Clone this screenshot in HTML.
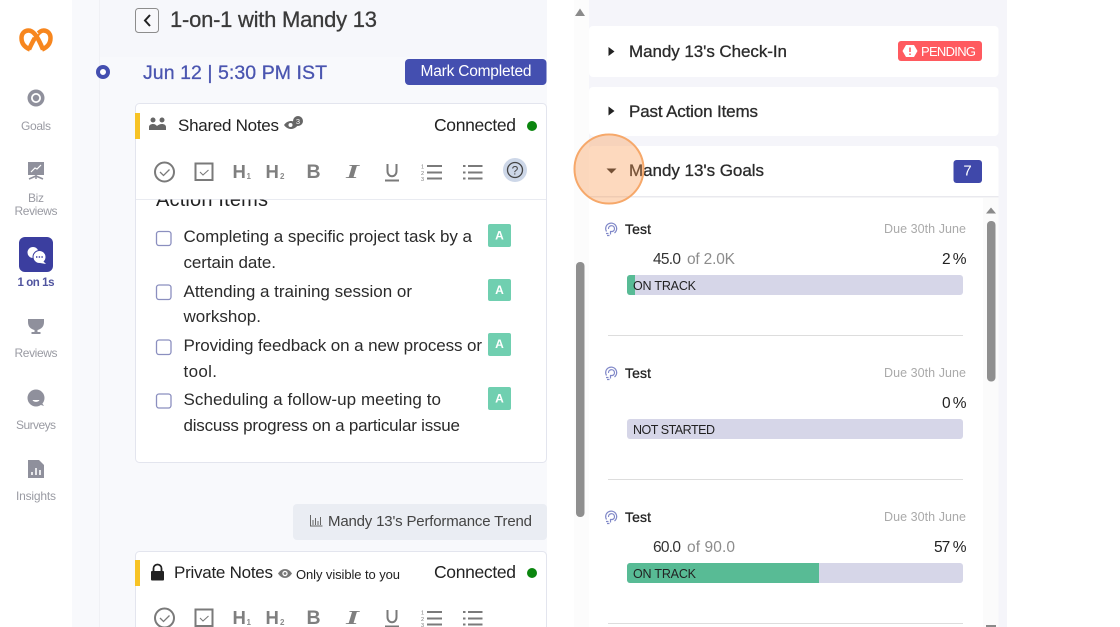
<!DOCTYPE html>
<html><head><meta charset="utf-8"><title>1-on-1 with Mandy 13</title>
<style>
html,body{margin:0;padding:0;width:1120px;height:627px;overflow:hidden;background:#fff}
svg{display:block;filter:blur(.3px)}
text{font-family:"Liberation Sans",sans-serif;fill:#2b2b2b}
.m{stroke:currentColor;stroke-width:.3px}
.nav{font-size:12px;fill:#9a9ba3;text-anchor:middle}
.ic{fill:#8f909c}
.tb{fill:none;stroke:#7a7a7a}
.h{font-weight:bold;fill:#7f7f7f}
.s{font-size:8px;font-weight:bold;fill:#8a8a8a}
</style></head><body>
<svg width="1120" height="627" viewBox="0 0 1120 627" xmlns="http://www.w3.org/2000/svg">
<defs><clipPath id="ai"><rect x="140" y="199.500" width="400" height="14"/></clipPath></defs>
<!-- backgrounds -->
<rect width="1120" height="627" fill="#fff"/>
<rect x="72" width="475" height="627" fill="#f8f9fc"/>
<rect x="99" width="1" height="627" fill="#f0f1f5"/>
<rect x="100" width="447" height="57" fill="#f6f7fb"/>
<rect x="574" width="15" height="627" fill="#fcfcfc"/>
<rect x="589" width="418" height="627" fill="#f5f5fa"/>

<!-- sidebar -->
<g fill="none" stroke-linecap="butt">
<path d="M42 49.500C48 47 50.500 43 50.500 38 50.500 33 47 30.500 43.500 30.500 39 30.500 35 36 29 49.500" stroke="#f7861e" stroke-width="4.500"/>
<path d="M30 49.500C24 47 21.500 43 21.500 38 21.500 33 25 30.500 28.500 30.500 33 30.500 37 35 43 49.500" stroke="#fff" stroke-width="6.500" stroke-dasharray="0 22 14 100"/>
<path d="M30 49.500C24 47 21.500 43 21.500 38 21.500 33 25 30.500 28.500 30.500 33 30.500 37 35 43 49.500" stroke="#f7861e" stroke-width="4.500"/>
</g>
<circle cx="36" cy="98" r="8.500" class="ic"/><circle cx="36" cy="98" r="5" fill="#fff"/><circle cx="36" cy="98" r="3.200" class="ic"/>
<text class="nav" x="36" y="130" textLength="30">Goals</text>
<rect x="28" y="162" width="16" height="13" class="ic"/><path d="M31 172l4-4 2 1 4-4" stroke="#fff" stroke-width="1.200" fill="none"/><path d="M36 175v4M29 179l7-3 7 3" stroke="#8f909c" stroke-width="1.500" fill="none"/>
<text class="nav" x="36" y="202" textLength="16">Biz</text>
<text class="nav" x="36" y="215" textLength="43">Reviews</text>
<rect x="19" y="237" width="34" height="35" rx="6" fill="#3b3e9f"/>
<circle cx="33" cy="252.500" r="5.500" fill="#fff"/><circle cx="39.500" cy="257" r="6.500" fill="#fff" stroke="#3b3e9f"/><path d="M43 261l3 3-6-1z" fill="#fff"/>
<path d="M36 257h7.500" stroke="#3b3e9f" stroke-width="1.400" stroke-dasharray="1.400 1.300"/>
<text x="36" y="286" font-size="11.500" font-weight="bold" text-anchor="middle" textLength="37" style="fill:#50549f">1 on 1s</text>
<path d="M28 319h16v3c0 5-3 7-6.500 8v2h3v2h-9v-2h3v-2C31 329 28 327 28 322z" class="ic"/>
<text class="nav" x="36" y="357" textLength="43">Reviews</text>
<circle cx="36" cy="398" r="8.500" class="ic"/><path d="M41 405l3 1-2-3z" class="ic"/><path d="M32.500 400h7c-1 2.500-6 2.500-7 0z" fill="#fff"/>
<text class="nav" x="36" y="429" textLength="40">Surveys</text>
<path d="M28 460h11l5 5v13H28z" class="ic"/><path d="M32 475v-3M36 475v-7M40 475v-5" stroke="#fff" stroke-width="1.600"/>
<text class="nav" x="36" y="500" textLength="40">Insights</text>

<!-- timeline dot -->
<circle cx="103" cy="72" r="5" fill="#fff" stroke="#444fb0" stroke-width="4"/>

<!-- header -->
<rect x="135.500" y="8.500" width="23" height="24" rx="3" fill="#f8f8fb" stroke="#8d8d8d"/>
<path d="M150 15l-5 5.500 5 5.500" fill="none" stroke="#222" stroke-width="2"/>
<text x="170" y="27" font-size="22" textLength="207" class="m" style="color:#3a3a3a;fill:#3a3a3a">1-on-1 with Mandy 13</text>
<text x="143" y="79" font-size="19.500" textLength="184" class="m" style="color:#4a55b0;fill:#4a55b0" xml:space="preserve">Jun 12 | 5:30 PM IST</text>
<rect x="405" y="59" width="141.500" height="26" rx="4" fill="#444fb0"/>
<text x="420.500" y="76" font-size="15.500" textLength="111" style="fill:#fff">Mark Completed</text>

<!-- shared notes card -->
<rect x="135.500" y="103.500" width="411" height="359" rx="4" fill="#fff" stroke="#e3e5ee"/>
<rect x="135" y="113" width="5" height="26" fill="#f7c325"/>
<g fill="#666"><circle cx="153" cy="120" r="2.500"/><circle cx="162" cy="120" r="2.500"/><path d="M149 130v-3c0-2 2-3 4-3s3 1 4 2c1-1 3-2 5-2s4 1 4 3v3z"/></g>
<text x="178" y="131" font-size="17" textLength="101" style="fill:#222">Shared Notes</text>
<path d="M284 125c2-3 5-4 7-4s5 1 7 4c-2 3-5 4-7 4s-5-1-7-4z" fill="#666"/><circle cx="290.500" cy="125" r="2" fill="#fff"/><circle cx="298" cy="121" r="5" fill="#666"/>
<text x="298" y="124" font-size="7.500" text-anchor="middle" style="fill:#fff">3</text>
<text x="434" y="131" font-size="17.500" textLength="82" style="fill:#222">Connected</text>
<circle cx="532" cy="126" r="5" fill="#0b860f"/>
<!-- toolbar -->
<g stroke-width="2">
<circle cx="164.500" cy="172" r="9.500" class="tb"/><path d="M160 172l3.500 3.500 6-6" class="tb" stroke-width="1.300"/>
<rect x="195.500" y="163.500" width="17" height="16.500" class="tb"/><path d="M200 172l3 3 5.500-5" class="tb" stroke-width="1.100"/>
<text x="232.500" y="178" class="h" font-size="18.500">H</text><text x="246.500" y="179" class="s">1</text>
<text x="265.500" y="178" class="h" font-size="18.500">H</text><text x="280" y="179" class="s">2</text>
<text x="306.500" y="178" class="h" font-size="19.500">B</text>
<text x="346" y="178" class="h" font-size="20" font-style="italic" textLength="13" lengthAdjust="spacingAndGlyphs" style="font-family:'Liberation Serif',serif">I</text>
<path d="M387.500 164v7c0 7 9 7 9 0v-7" class="tb"/><path d="M385 180.500h14" class="tb"/>
<path d="M427 166h15M427 172.500h15M427 178.500h15" class="tb"/>
<text x="421" y="168.500" font-size="5.500" style="fill:#7a7a7a">1</text><text x="421" y="175" font-size="5.500" style="fill:#7a7a7a">2</text><text x="421" y="181" font-size="5.500" style="fill:#7a7a7a">3</text>
<path d="M468 166h14.500M468 172.500h14.500M468 178.500h14.500" class="tb"/>
<path d="M463 166h2.500M463 172.500h2.500M463 178.500h2.500" class="tb"/>
<circle cx="515" cy="170" r="12" fill="#cdd7e8"/><circle cx="515" cy="170" r="7.500" fill="none" stroke="#444" stroke-width="1.300"/>
<text x="515" y="174.500" font-size="12" text-anchor="middle" style="fill:#444">?</text>
</g>
<rect x="136" y="199" width="410" height="1" fill="#e9ebf1"/>
<g clip-path="url(#ai)"><text x="156" y="206" font-size="20" textLength="112" style="fill:#222">Action Items</text></g>

<!-- action items -->
<g fill="#fff" stroke="#8b8fbf" stroke-width="1.300">
<rect x="156.500" y="231.500" width="14.500" height="14" rx="2.500"/>
<rect x="156.500" y="285" width="14.500" height="14.500" rx="2.500"/>
<rect x="156.500" y="340" width="14.500" height="14.500" rx="2.500"/>
<rect x="156.500" y="394" width="14.500" height="14" rx="2.500"/>
</g>
<g font-size="17">
<text x="183.500" y="242" textLength="288.500">Completing a specific project task by a</text>
<text x="183.500" y="268" textLength="92.500">certain date.</text>
<text x="183.500" y="297" textLength="228.500">Attending a training session or</text>
<text x="183.500" y="322" textLength="77.500">workshop.</text>
<text x="183.500" y="351" textLength="298.500">Providing feedback on a new process or</text>
<text x="183.500" y="377" textLength="33.500">tool.</text>
<text x="183.500" y="405" textLength="257.500">Scheduling a follow-up meeting to</text>
<text x="183.500" y="431" textLength="276.500">discuss progress on a particular issue</text>
</g>
<g fill="#70cfb0">
<rect x="488" y="224" width="23" height="23" rx="2"/><rect x="488" y="279" width="23" height="22" rx="2"/>
<rect x="488" y="333" width="23" height="23" rx="2"/><rect x="488" y="387" width="23" height="23" rx="2"/>
</g>
<g font-size="12" font-weight="bold" text-anchor="middle">
<text x="499.500" y="239.500" style="fill:#fff">A</text><text x="499.500" y="294" style="fill:#fff">A</text>
<text x="499.500" y="348" style="fill:#fff">A</text><text x="499.500" y="402.500" style="fill:#fff">A</text>
</g>

<!-- performance trend -->
<rect x="293" y="504" width="254" height="36" rx="4" fill="#eaedf3"/>
<path d="M310.500 515v11h12M313 525v-5M315.500 525v-7M318 525v-4M320.500 525v-8" fill="none" stroke="#666" stroke-width="1"/>
<text x="328" y="526" font-size="15" textLength="204" style="fill:#444">Mandy 13's Performance Trend</text>

<!-- private notes -->
<rect x="135.500" y="551.500" width="411" height="90" rx="4" fill="#fff" stroke="#e3e5ee"/>
<rect x="135" y="560" width="5" height="26" fill="#f7c325"/>
<rect x="151" y="571" width="13" height="9.500" rx="1" fill="#222"/><path d="M153.500 571v-2.500a4 4 0 0 1 8 0V571" fill="none" stroke="#222" stroke-width="1.800"/>
<text x="174" y="578" font-size="17" textLength="99" style="fill:#222">Private Notes</text>
<path d="M278 573.500c2-3 4.500-4.500 7-4.500s5 1.500 7 4.500c-2 3-4.500 4.500-7 4.500s-5-1.500-7-4.500z" fill="#777"/><circle cx="285" cy="573.500" r="2.700" fill="#fff"/><circle cx="285" cy="573.500" r="1.400" fill="#777"/>
<text x="296" y="579" font-size="13" textLength="104" style="fill:#222">Only visible to you</text>
<text x="434" y="578" font-size="17.500" textLength="82" style="fill:#222">Connected</text>
<circle cx="532" cy="573" r="5" fill="#0b860f"/>
<g stroke-width="2">
<circle cx="164.500" cy="618" r="9.500" class="tb"/><path d="M160 618l3.500 3.500 6-6" class="tb" stroke-width="1.300"/>
<rect x="195.500" y="609.500" width="17" height="16.500" class="tb"/><path d="M200 618l3 3 5.500-5" class="tb" stroke-width="1.100"/>
<text x="232.500" y="624" class="h" font-size="18.500">H</text><text x="246.500" y="625" class="s">1</text>
<text x="265.500" y="624" class="h" font-size="18.500">H</text><text x="280" y="625" class="s">2</text>
<text x="306.500" y="624" class="h" font-size="19.500">B</text>
<text x="346" y="624" class="h" font-size="20" font-style="italic" textLength="13" lengthAdjust="spacingAndGlyphs" style="font-family:'Liberation Serif',serif">I</text>
<path d="M387.500 610v7c0 7 9 7 9 0v-7" class="tb"/><path d="M385 626.500h14" class="tb"/>
<path d="M427 612h15M427 618.500h15M427 624.500h15" class="tb"/>
<text x="421" y="614.500" font-size="5.500" style="fill:#7a7a7a">1</text><text x="421" y="621" font-size="5.500" style="fill:#7a7a7a">2</text><text x="421" y="627" font-size="5.500" style="fill:#7a7a7a">3</text>
<path d="M468 612h14.500M468 618.500h14.500M468 624.500h14.500" class="tb"/>
<path d="M463 612h2.500M463 618.500h2.500M463 624.500h2.500" class="tb"/>
</g>

<!-- main scrollbar -->
<path d="M575 16l5-7.500 5 7.500z" fill="#8a8a8a"/>
<rect x="576" y="262" width="8.500" height="255" rx="4" fill="#8f8f8f"/>

<!-- right cards -->
<rect x="589" y="26" width="409.500" height="51" rx="4" fill="#fff"/>
<rect x="589" y="87" width="409.500" height="49" rx="4" fill="#fff"/>
<path d="M589 150a4 4 0 0 1 4-4h401.500a4 4 0 0 1 4 4v477H589z" fill="#fff"/>
<rect x="589" y="196" width="409.500" height="1.500" fill="#e9e9ee"/>
<path d="M608.500 47l6 4.500-6 4.500z" fill="#222"/>
<path d="M608.500 106.500l6 4.500-6 4.500z" fill="#222"/>
<text x="629" y="57" font-size="17" textLength="158" class="m" style="color:#2b2b2b">Mandy 13's Check-In</text>
<text x="629" y="117" font-size="17" textLength="129" class="m" style="color:#2b2b2b">Past Action Items</text>
<text x="629" y="176" font-size="17" textLength="135" class="m" style="color:#2b2b2b">Mandy 13's Goals</text>
<rect x="898" y="41" width="84" height="20" rx="3" fill="#ff5a5f"/>
<path d="M906 45h8l3.500 6-3.500 6h-8l-3.500-6z" fill="#fff"/><path d="M910 47.500v4.500M910 53.500v1.500" stroke="#ff5a5f" stroke-width="1.500"/>
<text x="921" y="56" font-size="13" textLength="55" style="fill:#fff">PENDING</text>
<rect x="953.500" y="160" width="28.500" height="23" rx="3" fill="#3f48aa"/>
<text x="967.500" y="175.500" font-size="15" text-anchor="middle" style="fill:#fff">7</text>

<!-- goals scroll track -->
<rect x="983" y="198" width="15.500" height="429" fill="#fbfbfb"/>
<path d="M986 213.500l5-6 5 6z" fill="#8a8a8a"/>
<rect x="987" y="221" width="8.500" height="160.500" rx="4" fill="#8f8f8f"/>
<rect x="986" y="625" width="10" height="2" fill="#8a8a8a"/>

<!-- goal 1 -->
<g fill="none" stroke="#8088c8" stroke-width="1.200"><path d="M606.500 231.500a5.500 5.500 0 1 1 8 1.500"/><path d="M608.500 229a3 3 0 1 1 4 2.500h-2v3M606 233.500h2.500M607 235.500h2.500"/></g>
<text x="625" y="234" font-size="14" textLength="26" class="m" style="color:#222;fill:#222">Test</text>
<text x="884" y="233" font-size="12.500" textLength="82" style="fill:#aaa">Due 30th June</text>
<text x="653" y="264" font-size="15.500" textLength="28" style="fill:#333">45.0</text>
<text x="687" y="264" font-size="15.500" textLength="48" style="fill:#8c8c8c">of 2.0K</text>
<text x="942" y="264" font-size="15.500" textLength="24.500" style="fill:#222">2 %</text>
<rect x="627" y="275" width="336" height="20" rx="3" fill="#d6d6e8"/>
<path d="M630 275h5v20h-5a3 3 0 0 1-3-3v-14a3 3 0 0 1 3-3z" fill="#58bb95"/>
<text x="633" y="290" font-size="12.500" textLength="63" style="fill:#222">ON TRACK</text>
<rect x="608" y="335" width="355" height="1" fill="#ddd"/>

<!-- goal 2 -->
<g fill="none" stroke="#8088c8" stroke-width="1.200"><path d="M606.500 375.500a5.500 5.500 0 1 1 8 1.500"/><path d="M608.500 373a3 3 0 1 1 4 2.500h-2v3M606 377.500h2.500M607 379.500h2.500"/></g>
<text x="625" y="378" font-size="14" textLength="26" class="m" style="color:#222;fill:#222">Test</text>
<text x="884" y="377" font-size="12.500" textLength="82" style="fill:#aaa">Due 30th June</text>
<text x="942" y="408" font-size="15.500" textLength="24.500" style="fill:#222">0 %</text>
<rect x="627" y="419" width="336" height="20" rx="3" fill="#d6d6e8"/>
<text x="633" y="434" font-size="12.500" textLength="82" style="fill:#222">NOT STARTED</text>
<rect x="608" y="479" width="355" height="1" fill="#ddd"/>

<!-- goal 3 -->
<g fill="none" stroke="#8088c8" stroke-width="1.200"><path d="M606.500 519.500a5.500 5.500 0 1 1 8 1.500"/><path d="M608.500 517a3 3 0 1 1 4 2.500h-2v3M606 521.500h2.500M607 523.500h2.500"/></g>
<text x="625" y="522" font-size="14" textLength="26" class="m" style="color:#222;fill:#222">Test</text>
<text x="884" y="521" font-size="12.500" textLength="82" style="fill:#aaa">Due 30th June</text>
<text x="653" y="552" font-size="15.500" textLength="28" style="fill:#333">60.0</text>
<text x="687" y="552" font-size="15.500" textLength="48" style="fill:#8c8c8c">of 90.0</text>
<text x="934" y="552" font-size="15.500" textLength="32.500" style="fill:#222">57 %</text>
<rect x="627" y="563" width="336" height="20" rx="3" fill="#d6d6e8"/>
<path d="M630 563h189v20H630a3 3 0 0 1-3-3v-14a3 3 0 0 1 3-3z" fill="#58bb95"/>
<text x="633" y="578" font-size="12.500" textLength="63" style="fill:#222">ON TRACK</text>
<rect x="608" y="623" width="355" height="1" fill="#ddd"/>

<!-- highlight -->
<path d="M606.500 168.500h10l-5 5z" fill="#222"/>
<circle cx="609" cy="169" r="34.500" fill="#fb9a55" fill-opacity=".38" stroke="#f6a86a" stroke-width="2"/>
</svg>
</body></html>
